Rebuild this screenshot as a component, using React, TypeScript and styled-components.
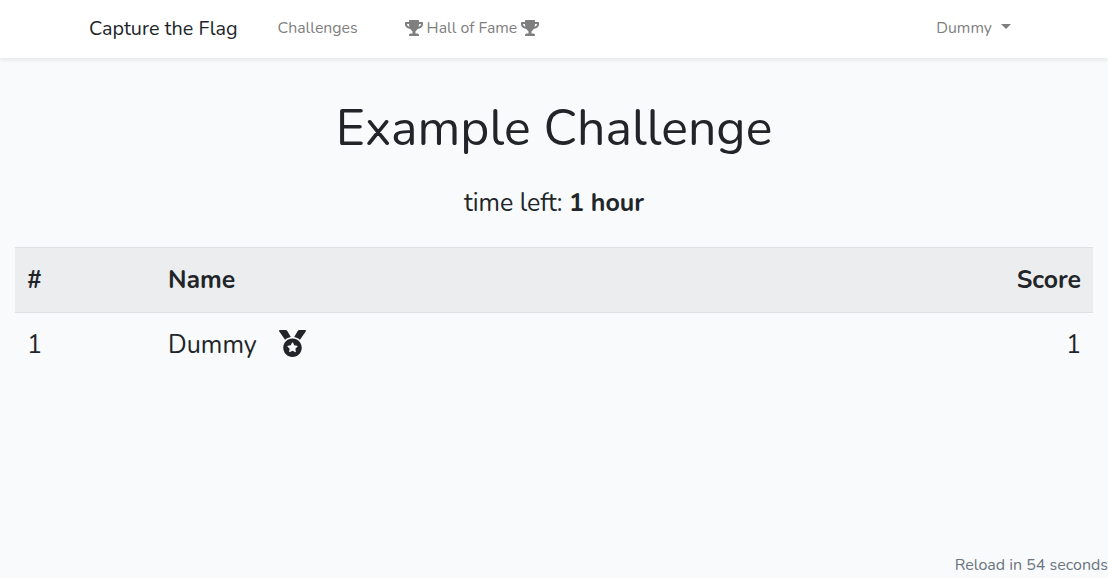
import React from "react";
import styled, { createGlobalStyle } from "styled-components";
import { FaTrophy, FaMedal } from "react-icons/fa";

const Global = createGlobalStyle`
  html, body { margin: 0; padding: 0; height: 100%; }
  body { background: #f8fafc; font-family: "Nunito", "Open Sans", "Noto Sans", sans-serif; color: #212529; overflow: hidden; }
  #root { height: 100%; }
`;

const Page = styled.div`
  height: 578px;
  display: flex;
  flex-direction: column;
`;

const Nav = styled.nav`
  height: 58px;
  box-sizing: border-box;
  padding: 0 97px 2px 89px;
  background: #fff;
  box-shadow: 0 2px 4px rgba(0, 0, 0, 0.08);
  display: flex;
  align-items: center;
`;

const Brand = styled.span`
  font-size: 19.8px;
  color: #212529;
  margin-right: 40px;
`;

const NavLink = styled.span`
  font-size: 15.84px;
  color: #7f7f7f;
  display: inline-flex;
  align-items: center;
  gap: 4px;
  margin-right: 47px;
`;

const UserLink = styled(NavLink)`
  margin-right: 0;
`;

const Spacer = styled.div`
  flex: 1;
`;

const Caret = styled.span`
  display: inline-block;
  margin-left: 5px;
  margin-bottom: 3px;
  border-top: 5px solid #7f7f7f;
  border-left: 5px solid transparent;
  border-right: 5px solid transparent;
`;

const Main = styled.main`
  flex: 1;
  padding: 0 15px;
  display: flex;
  flex-direction: column;
`;

const Title = styled.h1`
  margin: 37px 0 0;
  font-size: 50px;
  font-weight: 400;
  line-height: 67px;
  text-align: center;
`;

const Sub = styled.p`
  margin: 23px 0 26px;
  font-size: 25px;
  line-height: 36px;
  text-align: center;
  font-weight: 400;
  b { font-weight: 700; }
`;

const Table = styled.table`
  width: 100%;
  table-layout: fixed;
  border-collapse: collapse;
  font-size: 25.2px;
`;

const Th = styled.th<{ $right?: boolean; $w?: string }>`
  background: #ecedef;
  border-top: 1px solid #dee2e6;
  border-bottom: 1px solid #dee2e6;
  padding: 12px 12px 13px;
  height: 65px;
  box-sizing: border-box;
  font-weight: 700;
  font-size: 24.8px;
  color: #212529;
  text-align: ${(p) => (p.$right ? "right" : "left")};
  width: ${(p) => p.$w ?? "auto"};
`;

const Td = styled.td<{ $right?: boolean }>`
  padding: 13px 12px 12px;
  height: 64px;
  box-sizing: border-box;
  font-weight: 400;
  text-align: ${(p) => (p.$right ? "right" : "left")};
`;

const MedalIcon = styled(FaMedal)`
  font-size: 27px;
  margin-left: 22px;
  vertical-align: -4px;
`;

const Foot = styled.div`
  text-align: right;
  font-size: 16px;
  color: #6c757d;
  line-height: 24px;
  padding-bottom: 1px;
`;

export default function App() {
  return (
    <Page>
      <Global />
      <Nav>
        <Brand>Capture the Flag</Brand>
        <NavLink>Challenges</NavLink>
        <NavLink>
          <FaTrophy size={18} /> Hall of Fame <FaTrophy size={18} />
        </NavLink>
        <Spacer />
        <UserLink>
          Dummy<Caret />
        </UserLink>
      </Nav>
      <Main>
        <Title>Example Challenge</Title>
        <Sub>
          time left: <b>1 hour</b>
        </Sub>
        <Table>
          <thead>
            <tr>
              <Th $w="141px">#</Th>
              <Th>Name</Th>
              <Th $right $w="200px">Score</Th>
            </tr>
          </thead>
          <tbody>
            <tr>
              <Td>1</Td>
              <Td>
                Dummy
                <MedalIcon />
              </Td>
              <Td $right>1</Td>
            </tr>
          </tbody>
        </Table>
        <Spacer />
      </Main>
      <Foot>Reload in 54 seconds</Foot>
    </Page>
  );
}
